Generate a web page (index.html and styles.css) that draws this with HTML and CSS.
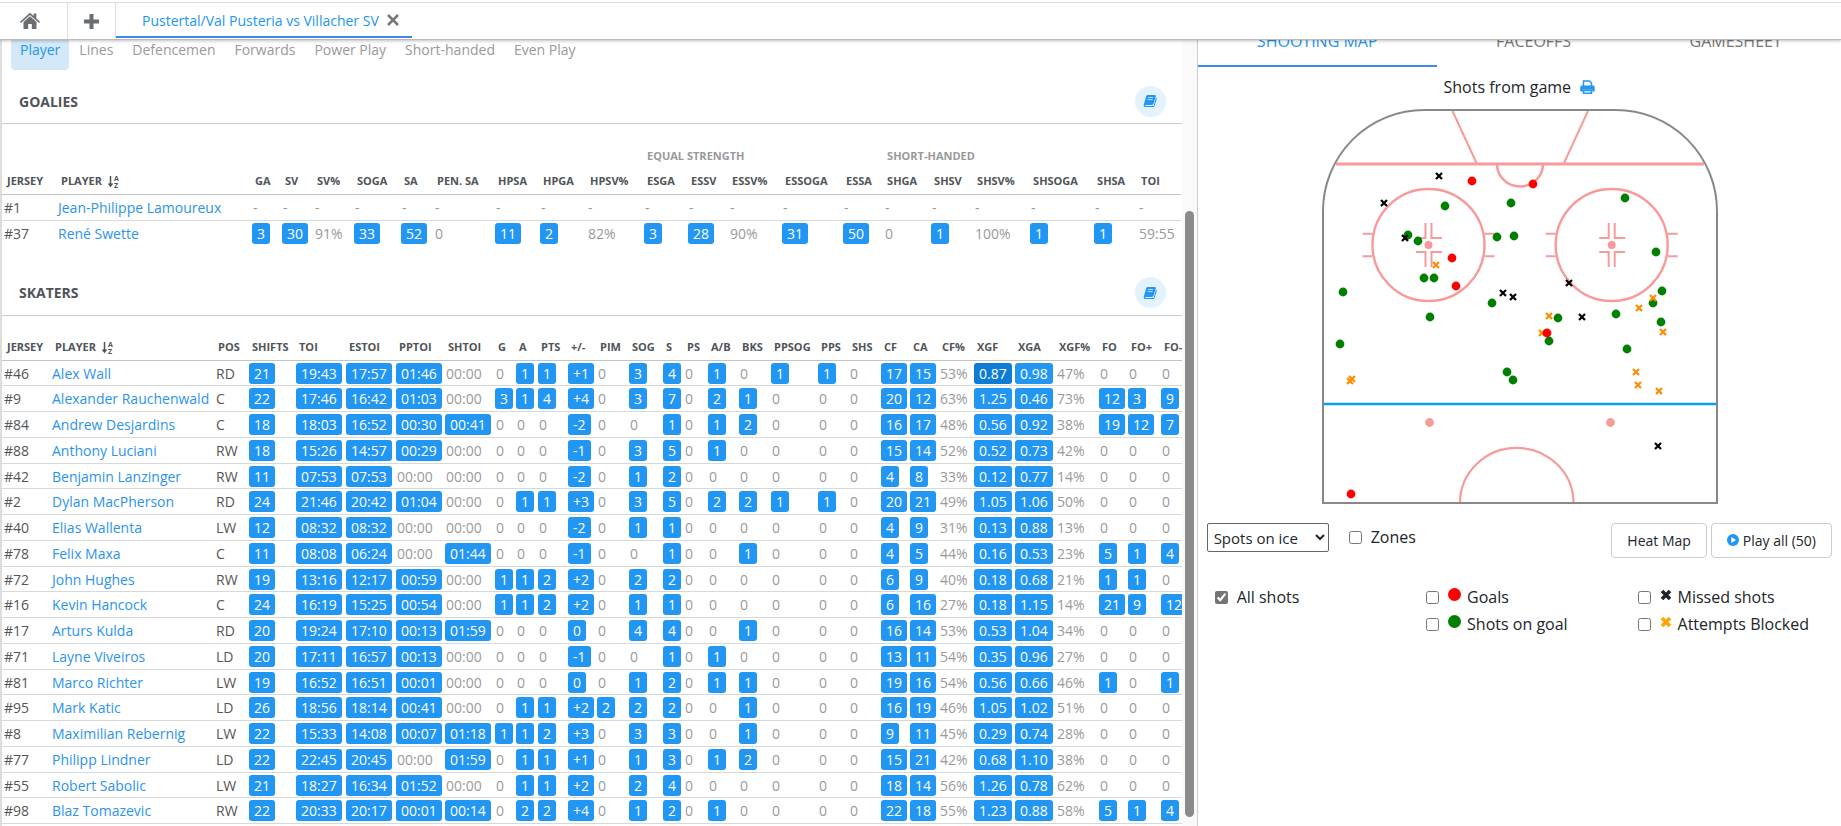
FILE: index.html
```html
<!DOCTYPE html>
<html lang="en">
<head>
<meta charset="utf-8">
<title>Pustertal/Val Pusteria vs Villacher SV</title>
<link rel="stylesheet" href="styles.css">
</head>
<body>
<svg class="defs" aria-hidden="true">
  <defs>
    <symbol id="book" viewBox="0 0 14 14"><path fill="currentColor" fill-rule="evenodd" d="M4.6 1h7.2c.8 0 1.2.6 1 1.300l-2.300 7.500c-.2.700-.700 1.100-1.400 1.100H2.600c-.500 0-.600.400-.300.800.2.200.500.300.900.300h6.600c.500 0 .8-.300 1-.800L13 3.600c.6.300.8.800.6 1.400l-2.100 7c-.2.700-.9 1.100-1.600 1.100H2.800C1.400 13.100.4 12 .7 10.700L3.200 2.200C3.400 1.400 3.900 1 4.600 1zM5.300 3.200l-.3.900h5l.3-.9zM4.700 5.200l-.3.900h5l.3-.9z"/></symbol>
    <symbol id="cross" viewBox="0 0 12 12"><path d="M2 2 10 10M10 2 2 10" fill="none" stroke="currentColor" stroke-width="3.600"/></symbol>
    <symbol id="sort" viewBox="0 0 12 13"><path d="M2.500 1v9.500M.5 8.500l2 2.500 2-2.500" fill="none" stroke="#505458" stroke-width="1.500"/><text x="6" y="6" class="sort-letter">A</text><text x="6" y="13" class="sort-letter">Z</text></symbol>
    <path id="shot-x" d="M-3-3 3 3M3-3-3 3"/>
    <g id="faceoff">
      <circle r="56"/>
      <path d="M-66-11.300h10M-66 11.300h10M56-11.300h10M56 11.300h10" stroke-width="2"/>
      <path d="M-3-22V-7H-12.500M3-22V-7H13.500M-3 22V7H-12.500M3 22V7H13.500" stroke-width="2"/>
      <circle r="4" fill="#f89a9a" stroke="none"/>
    </g>
  </defs>
</svg>

<header class="topbar">
  <button class="icon-tab home" aria-label="Home">
    <svg width="20" height="18" viewBox="0 0 20 18"><path fill="currentColor" d="M10 .8 13.600 4V1.600h2.700v4.800L20 9.700l-1 1.200-9-8-9 8-1-1.200zM10 4.300l6.500 5.800V17h-4.700v-5H8.200v5H3.500v-6.900z"/></svg>
  </button>
  <button class="icon-tab plus" aria-label="New tab">
    <svg width="15" height="15" viewBox="0 0 15 15"><path fill="currentColor" d="M5.500 0h4v5.500H15v4H9.500V15h-4V9.500H0v-4h5.500z"/></svg>
  </button>
  <div class="game-tab">
    <a href="#">Pustertal/Val Pusteria vs Villacher SV</a>
    <button class="close" aria-label="Close tab"><svg width="12" height="12" viewBox="0 0 12 12"><path d="M1 1 11 11M11 1 1 11" stroke="currentColor" stroke-width="2.500"/></svg></button>
  </div>
</header>

<main class="main">
  <section class="stats">
    <div class="stats-body">
      <nav class="filters">
        <a class="filter active" href="#">Player</a>
        <a class="filter" href="#">Lines</a>
        <a class="filter" href="#">Defencemen</a>
        <a class="filter" href="#">Forwards</a>
        <a class="filter" href="#">Power Play</a>
        <a class="filter" href="#">Short-handed</a>
        <a class="filter" href="#">Even Play</a>
      </nav>

      <div class="title-bar">
        <h2>GOALIES</h2>
        <button class="round" aria-label="Glossary"><svg width="14" height="14"><use href="#book"/></svg></button>
      </div>
      <table class="grid goalies" id="goalies"></table>

      <div class="title-bar">
        <h2>SKATERS</h2>
        <button class="round" aria-label="Glossary"><svg width="14" height="14"><use href="#book"/></svg></button>
      </div>
      <table class="grid skaters" id="skaters"></table>
    </div>
    <div class="scroll-track"><div class="scroll-thumb"></div></div>
  </section>

  <aside class="side">
    <nav class="side-tabs">
      <a class="side-tab active" href="#">SHOOTING MAP</a>
      <a class="side-tab" href="#">FACEOFFS</a>
      <a class="side-tab" href="#">GAMESHEET</a>
    </nav>

    <div class="map-title">
      <span>Shots from game</span>
      <button class="print" aria-label="Print"><svg width="15" height="14" viewBox="0 0 15 14"><path fill="none" stroke="currentColor" stroke-width="1.500" d="M3.500 6V1h6l2 2v3M3.500 10.500v2.700h8v-2.700z"/><path fill="currentColor" d="M2 5.500h11c1 0 1.700.7 1.700 1.700v4.300h-2.500V9.700H2.800v1.800H.3V7.200C.3 6.200 1 5.500 2 5.500z"/></svg></button>
    </div>

    <svg class="rink" viewBox="0 0 396 396" role="img" aria-label="Shots from game">
      <g class="rink-red">
        <path d="M14 55H382" stroke-width="3"/>
        <path d="M130.500 2 154.500 54M266 2 242 54" stroke-width="2"/>
        <path d="M175 55a22.500 22 0 0 0 46 0" stroke-width="2.500"/>
        <use href="#faceoff" x="106.500" y="136"/>
        <use href="#faceoff" x="289.700" y="136"/>
        <path d="M138 394a56.700 55 0 0 1 113.500 0" stroke-width="2.200"/>
        <g class="rink-dot"><circle cx="107.500" cy="313.500" r="4.400"/><circle cx="288.500" cy="313.500" r="4.400"/></g>
      </g>
      <path d="M2 295H394" stroke="#0c9cf8" stroke-width="2.600"/>
      <path class="rink-board" d="M1 394V102A101 101 0 0 1 102 1H294A101 101 0 0 1 395 102V394Z"/>
      <g id="shots"></g>
    </svg>

    <div class="controls">
      <select class="spot-select" aria-label="Map type"><option>Spots on ice</option></select>
      <label class="check"><input type="checkbox"><span>Zones</span></label>
      <div class="actions">
        <button class="btn">Heat Map</button>
        <button class="btn"><svg width="12" height="12" viewBox="0 0 12 12"><circle cx="6" cy="6" r="6" fill="#2196f3"/><path d="M4.300 3 9 6 4.300 9z" fill="#fff"/></svg>Play all (50)</button>
      </div>
    </div>

    <div class="legend">
      <label class="check"><input type="checkbox" checked><span>All shots</span></label>
      <label class="check"><input type="checkbox"><i class="dot goal"></i><span>Goals</span></label>
      <label class="check"><input type="checkbox"><svg class="mark missed" width="12" height="12"><use href="#cross"/></svg><span>Missed shots</span></label>
      <label class="check second"><input type="checkbox"><i class="dot on-goal"></i><span>Shots on goal</span></label>
      <label class="check"><input type="checkbox"><svg class="mark blocked" width="12" height="12"><use href="#cross"/></svg><span>Attempts Blocked</span></label>
    </div>
  </aside>
</main>
<script src="app.js"></script>
</body>
</html>
```
FILE: app.js
```js
const goalieCols = {
  names: ['JERSEY','PLAYER','GA','SV','SV%','SOGA','SA','PEN. SA','HPSA','HPGA','HPSV%','ESGA','ESSV','ESSV%','ESSOGA','ESSA','SHGA','SHSV','SHSV%','SHSOGA','SHSA','TOI'],
  widths: [54,195,30,32,40,47,33,61,45,47,57,44,41,53,61,41,47,43,56,64,44,44]
};
const goalies = [
  '#1|Jean-Philippe Lamoureux' + '|-'.repeat(20),
  '#37|René Swette|3|30|91%|33|52|0|11|2|82%|3|28|90%|31|50|0|1|100%|1|1|59:55'
];
const skaterCols = {
  names: ['JERSEY','PLAYER','POS','SHIFTS','TOI','ESTOI','PPTOI','SHTOI','G','A','PTS','+/-','PIM','SOG','S','PS','A/B','BKS','PPSOG','PPS','SHS','CF','CA','CF%','XGF','XGA','XGF%','FO','FO+','FO-'],
  widths: [48,164,34,47,50,50,49,50,21,22,30,29,32,34,21,24,31,32,47,31,32,29,29,35,41,41,43,29,33,34]
};
const skaters = [
  '#46|Alex Wall|RD|21|19:43|17:57|01:46|00:00|0|1|1|+1|0|3|4|0|1|0|1|1|0|17|15|53%|0.87|0.98|47%|0|0|0',
  '#9|Alexander Rauchenwald|C|22|17:46|16:42|01:03|00:00|3|1|4|+4|0|3|7|0|2|1|0|0|0|20|12|63%|1.25|0.46|73%|12|3|9',
  '#84|Andrew Desjardins|C|18|18:03|16:52|00:30|00:41|0|0|0|-2|0|0|1|0|1|2|0|0|0|16|17|48%|0.56|0.92|38%|19|12|7',
  '#88|Anthony Luciani|RW|18|15:26|14:57|00:29|00:00|0|0|0|-1|0|3|5|0|1|0|0|0|0|15|14|52%|0.52|0.73|42%|0|0|0',
  '#42|Benjamin Lanzinger|RW|11|07:53|07:53|00:00|00:00|0|0|0|-2|0|1|2|0|0|0|0|0|0|4|8|33%|0.12|0.77|14%|0|0|0',
  '#2|Dylan MacPherson|RD|24|21:46|20:42|01:04|00:00|0|1|1|+3|0|3|5|0|2|2|1|1|0|20|21|49%|1.05|1.06|50%|0|0|0',
  '#40|Elias Wallenta|LW|12|08:32|08:32|00:00|00:00|0|0|0|-2|0|1|1|0|0|0|0|0|0|4|9|31%|0.13|0.88|13%|0|0|0',
  '#78|Felix Maxa|C|11|08:08|06:24|00:00|01:44|0|0|0|-1|0|0|1|0|0|1|0|0|0|4|5|44%|0.16|0.53|23%|5|1|4',
  '#72|John Hughes|RW|19|13:16|12:17|00:59|00:00|1|1|2|+2|0|2|2|0|0|0|0|0|0|6|9|40%|0.18|0.68|21%|1|1|0',
  '#16|Kevin Hancock|C|24|16:19|15:25|00:54|00:00|1|1|2|+2|0|1|1|0|0|0|0|0|0|6|16|27%|0.18|1.15|14%|21|9|12',
  '#17|Arturs Kulda|RD|20|19:24|17:10|00:13|01:59|0|0|0|=0|0|4|4|0|0|1|0|0|0|16|14|53%|0.53|1.04|34%|0|0|0',
  '#71|Layne Viveiros|LD|20|17:11|16:57|00:13|00:00|0|0|0|-1|0|0|1|0|1|0|0|0|0|13|11|54%|0.35|0.96|27%|0|0|0',
  '#81|Marco Richter|LW|19|16:52|16:51|00:01|00:00|0|0|0|=0|0|1|2|0|1|1|0|0|0|19|16|54%|0.56|0.66|46%|1|0|1',
  '#95|Mark Katic|LD|26|18:56|18:14|00:41|00:00|0|1|1|+2|2|2|2|0|0|1|0|0|0|16|19|46%|1.05|1.02|51%|0|0|0',
  '#8|Maximilian Rebernig|LW|22|15:33|14:08|00:07|01:18|1|1|2|+3|0|3|3|0|0|1|0|0|0|9|11|45%|0.29|0.74|28%|0|0|0',
  '#77|Philipp Lindner|LD|22|22:45|20:45|00:00|01:59|0|1|1|+1|0|1|3|0|1|2|0|0|0|15|21|42%|0.68|1.10|38%|0|0|0',
  '#55|Robert Sabolic|LW|21|18:27|16:34|01:52|00:00|0|1|1|+2|0|2|4|0|0|0|0|0|0|18|14|56%|1.26|0.78|62%|0|0|0',
  '#98|Blaz Tomazevic|RW|22|20:33|20:17|00:01|00:14|0|2|2|+4|0|1|2|0|1|0|0|0|0|22|18|55%|1.23|0.88|58%|5|1|4'
];

function cell(value, name) {
  if (name === 'JERSEY' || name === 'POS') return `<td class="dark">${value}</td>`;
  if (name === 'PLAYER') return `<td><a class="player" href="#">${value}</a></td>`;
  const plain = value === '0' || value === '-' || value === '00:00' || value === '59:55' || value.endsWith('%');
  if (plain) return `<td>${value}</td>`;
  const text = value.replace('=', '');
  return `<td class="linked"><a class="pill${text === '0.87' ? ' hover' : ''}" href="#">${text}</a></td>`;
}

function build(id, cols, rows, groups) {
  const total = cols.widths.reduce((a, b) => a + b, 0);
  const sort = '<svg class="sort" width="12" height="13"><use href="#sort"/></svg>';
  const table = document.getElementById(id);
  table.style.width = total + 'px';
  table.innerHTML =
    '<colgroup>' + cols.widths.map(w => `<col style="width:${w}px">`).join('') + '</colgroup><thead>' + groups +
    '<tr>' + cols.names.map(n => `<th scope="col">${n}${n === 'PLAYER' ? sort : ''}</th>`).join('') + '</tr></thead><tbody>' +
    rows.map(r => '<tr>' + r.split('|').map((v, i) => cell(v, cols.names[i])).join('') + '</tr>').join('') + '</tbody>';
}

build('goalies', goalieCols, goalies,
  '<tr class="groups"><th colspan="11"></th><th colspan="5">EQUAL STRENGTH</th><th colspan="6">SHORT-HANDED</th></tr>');
build('skaters', skaterCols, skaters, '');

const shots = {
  green: [[123,97],[189,94],[86,126],[96,132],[175,128],[192,127],[102,169],[112,169],[21,183],[170,194],[108,208],[303,89],[334,143],[340,182],[331,194],[294,205],[236,209],[339,213],[227,232],[305,240],[18,235],[185,263],[191,271]],
  black: [[117,67],[62,94],[83,129],[181,184],[191,188],[247,174],[260,208],[336,337]],
  darkorange: [[114,156],[331,189],[317,199],[227,207],[220,224],[341,223],[314,263],[316,276],[337,282],[30,270],[28,272]],
  red: [[150,72],[130,149],[134,177],[211,75],[225,224],[29,385]]
};
document.getElementById('shots').innerHTML = Object.entries(shots).map(([color, list]) =>
  list.map(([x, y]) => color === 'green' || color === 'red'
    ? `<circle cx="${x}" cy="${y}" r="4.4" fill="${color}"/>`
    : `<use href="#shot-x" x="${x}" y="${y}" stroke="${color}" stroke-width="2.2"/>`).join('')).join('');
```
FILE: styles.css
```css
* { box-sizing: border-box; }

body {
  margin: 0;
  height: 100vh;
  display: flex;
  flex-direction: column;
  overflow: hidden;
  font: 14px/19px "Open Sans", sans-serif;
  color: #212529;
  background: #fff;
}

a { color: inherit; text-decoration: none; }
button { font: inherit; color: inherit; background: none; border: 0; padding: 0; }
.defs { display: none; }

.topbar {
  display: flex;
  flex: none;
  height: 40px;
  padding-top: 3px;
  background: linear-gradient(#ddd, #ddd) 0 2px / 100% 1px no-repeat #fff;
  border-bottom: 1px solid #bbb;
  box-shadow: 0 1px 3px rgba(0, 0, 0, .25);
  position: relative;
  z-index: 1;
}
.icon-tab { color: #6a6e72; border-right: 1px solid #ddd; display: grid; place-items: center; }
.home { width: 68px; padding-right: 8px; }
.plus { width: 48px; }
.game-tab {
  display: flex;
  align-items: center;
  gap: 8px;
  padding: 1px 13px 0 26px;
  margin-bottom: 1px;
  border-bottom: 2px solid #4285f4;
  color: #2196f3;
}
.close { color: #777; display: grid; }

.main { flex: 1; min-height: 0; display: grid; grid-template-columns: 65fr 35fr; }

.stats { display: flex; min-width: 0; overflow: hidden; border-left: 2px solid #ddd; }
.stats-body { flex: 1; min-width: 0; overflow: hidden; }
.scroll-track {
  flex: none;
  width: 15px;
  background: #fafafa;
  display: grid;
  grid-template-rows: 171fr 606fr 9fr;
  justify-items: center;
}
.scroll-thumb { grid-row: 2; width: 9px; border-radius: 5px; background: #8b8b8b; }

.filters { display: flex; gap: 1px; padding-left: 9px; color: #999; }
.filter { height: 30px; padding: 0 9px; border-radius: 0 0 4px 4px; }
.filter.active { background: #d3e8f9; color: #2196f3; }

.title-bar {
  display: flex;
  align-items: center;
  justify-content: space-between;
  height: 45px;
  margin-top: 9px;
  padding: 0 16px 0 17px;
  border-bottom: 1px solid #ccc;
}
.title-bar h2 { margin: 0; font-size: 14px; font-weight: 700; color: #505458; }
.round {
  width: 31px;
  height: 31px;
  border-radius: 50%;
  background: #e3f2fd;
  color: #2196f3;
  display: grid;
  place-items: center;
}

.grid { table-layout: fixed; border-collapse: separate; border-spacing: 0; color: #999; }
.grid th {
  height: 26px;
  padding: 0 0 2px 4px;
  text-align: left;
  white-space: nowrap;
  font-size: 11px;
  font-weight: 700;
  color: #505458;
  border-bottom: 1px solid #c4c4c4;
}
.grid th:first-child,
.grid th:nth-child(2) { padding-left: 5px; }
.grid .groups th { padding-left: 4px; color: #999; border: 0; }
.grid td { padding: 4px 0 2px 2px; white-space: nowrap; border-bottom: 1px solid #d8d8d8; line-height: 1.34; }
.grid .linked { padding-left: 1px; }
.goalies { margin-top: 19px; }
.goalies tr:last-child td { border-bottom: 0; }
.goalies + .title-bar { margin-top: 25px; }
.skaters { margin-top: 19px; }
.grid .dark { color: #555; }
.player { color: #2b93ee; }
.pill { padding: 1px 5px; border-radius: 3px; background: #2196f3; color: #fff; }
.pill.hover { background: #0c7cd5; }
.sort { margin-left: 6px; vertical-align: -3px; }
.sort-letter { font-size: 7px; font-weight: 700; fill: #505458; }

.side { border-left: 1px solid #ccc; min-width: 0; overflow: hidden; font-size: 16px; }
.side-tabs { display: flex; height: 27px; color: #777; }
.side-tab { flex: 1 1 auto; text-align: center; border-bottom: 2px solid transparent; line-height: 2px; }
.side-tab.active { color: #2196f3; border-color: #4285f4; }

.map-title { display: flex; justify-content: center; align-items: center; gap: 9px; height: 42px; padding-bottom: 2px; }
.print { color: #2196f3; display: grid; }

.rink { display: block; width: 397px; max-width: 100%; margin: 0 auto; padding-left: 1px; }
.rink-red { fill: none; stroke: #f89a9a; stroke-width: 2.4; }
.rink-dot { fill: #f89a9a; stroke: none; }
.rink-board { fill: none; stroke: #888; stroke-width: 2; }

.controls { display: flex; align-items: flex-start; gap: 20px; padding: 18px 9px 0; }
.spot-select {
  width: 122px;
  height: 29px;
  padding: 0 2px;
  font: inherit;
  font-size: 15px;
  color: inherit;
  background: #fff;
  border: 1px solid #666;
  border-radius: 2px;
}
.check { display: flex; align-items: center; }
.check input { margin: 0 9px 0 0; width: 13px; height: 13px; accent-color: #757575; }
.controls .check { height: 29px; }
.actions { display: flex; gap: 4px; margin-left: auto; }
.btn {
  display: flex;
  align-items: center;
  gap: 4px;
  height: 35px;
  padding: 0 15px 1px;
  font-size: 14px;
  border: 1px solid #ccc;
  border-radius: 4px;
}

.legend { display: grid; grid-template-columns: repeat(3, 1fr); padding: 26px 0 0 17px; margin-right: -8px; }
.legend .check { height: 27px; }
.legend .second { grid-column: 2; }
.dot { width: 13px; height: 13px; margin: 0 6px 6px 0; border-radius: 50%; }
.goal { background: red; }
.on-goal { background: green; }
.mark { margin: 0 6px 5px 0; }
.missed { color: #212529; }
.blocked { color: orange; }
```
